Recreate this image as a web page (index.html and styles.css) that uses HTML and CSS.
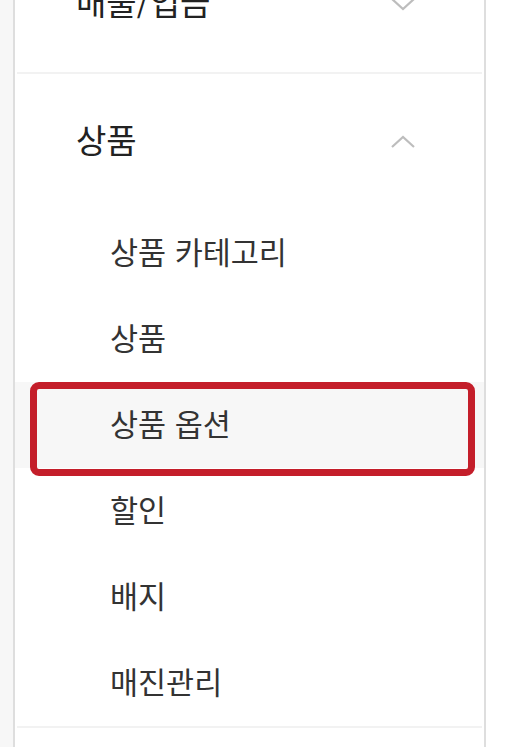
FILE: index.html
```html
<!DOCTYPE html>
<html lang="ko">
<head>
    <meta charset="UTF-8">
    <meta name="viewport" content="width=device-width, initial-scale=1.0">
    <title>메뉴</title>
    <link rel="stylesheet" href="styles.css">
</head>
<body>
    <div class="layout">
        <div class="gutter"></div>
        <nav class="side-menu">
            <div class="menu-section">
                <div class="menu-header">
                    <span>매출/입금</span>
                    <svg class="chevron" width="26" height="14" viewBox="0 0 26 14"><polyline points="2,2 13,12 24,2" /></svg>
                </div>
            </div>
            <div class="menu-section">
                <div class="menu-header">
                    <span>상품</span>
                    <svg class="chevron" width="26" height="14" viewBox="0 0 26 14"><polyline points="2,12 13,2 24,12" /></svg>
                </div>
                <ul class="sub-menu">
                    <li>상품 카테고리</li>
                    <li>상품</li>
                    <li class="active">상품 옵션</li>
                    <li>할인</li>
                    <li>배지</li>
                    <li>매진관리</li>
                </ul>
            </div>
            <div class="menu-section">
                <div class="menu-header"></div>
            </div>
        </nav>
        <div class="blank"></div>
    </div>
</body>
</html>
```

FILE: styles.css
```css
body {
    margin: 0;
    background-color: #ffffff;
    font-family: "Noto Sans CJK KR", "Noto Sans", sans-serif;
    overflow: hidden;
}
.layout {
    display: flex;
    height: 747px;
}
.gutter {
    width: 13px;
    background-color: #f7f7f7;
}
.side-menu {
    width: 469px;
    border-left: 2px solid #dedede;
    border-right: 2px solid #dedede;
    background-color: #ffffff;
}
.blank {
    flex: 1;
}
.menu-section {
    border-bottom: 2px solid #f2f2f2;
    margin: 0 2px;
}
.menu-section:first-child {
    margin-top: -64px;
}
.menu-header {
    height: 136px;
    box-sizing: border-box;
    display: flex;
    align-items: center;
    justify-content: space-between;
    padding: 0 66px 6px 59px;
    font-size: 33px;
    color: #222;
}
.menu-header .chevron {
    margin-top: 6px;
}
.chevron polyline {
    fill: none;
    stroke: #bdbdbd;
    stroke-width: 2.2;
}
.sub-menu {
    list-style: none;
    margin: 0 -2px;
    padding: 0;
}
.sub-menu li {
    height: 86px;
    box-sizing: border-box;
    display: flex;
    align-items: center;
    padding: 0 0 5px 95px;
    font-size: 30.5px;
    color: #333;
}
.sub-menu li.active {
    position: relative;
    background-color: #f7f7f7;
}
.sub-menu li.active::after {
    content: "";
    position: absolute;
    left: 15px;
    right: 9px;
    top: 0;
    bottom: -8px;
    border: 7px solid #c41e2a;
    border-radius: 9px;
}
```
